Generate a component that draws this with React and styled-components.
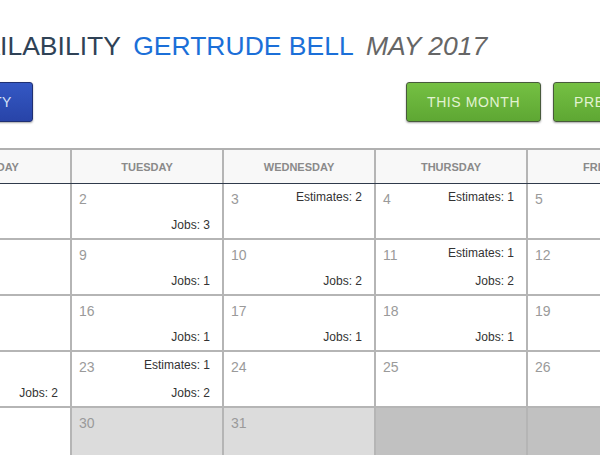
import React from "react";
import styled, { createGlobalStyle } from "styled-components";

const GlobalStyle = createGlobalStyle`
	body {
		margin: 0;
		background: #ffffff;
		overflow: hidden;
		font-family: "Liberation Sans", Arial, sans-serif;
	}
`;

const Page = styled.div`
	width: 1062px;
	margin-left: -232px;
`;

const Title = styled.h1`
	margin: 31px 0 0 183px;
	font-size: 26.5px;
	line-height: 30px;
	font-weight: normal;
	color: #2f4256;
	white-space: nowrap;
`;

const Name = styled.span`
	color: #1b6fd8;
	margin-left: 5px;
`;

const Month = styled.span`
	color: #666666;
	font-style: italic;
	margin-left: 5px;
`;

const Toolbar = styled.div`
	display: flex;
	margin-top: 21px;
	height: 40px;
`;

const LeftGroup = styled.div`
	flex: 0 0 265px;
	display: flex;
	justify-content: flex-end;
`;

const RightGroup = styled.div`
	flex: 0 0 auto;
	display: flex;
	gap: 12px;
	margin-left: 373px;
`;

const Button = styled.button`
	flex: 0 0 auto;
	height: 40px;
	padding: 0 20px;
	box-sizing: border-box;
	font-family: "Liberation Sans", Arial, sans-serif;
	font-size: 14px;
	letter-spacing: 0.6px;
	text-transform: uppercase;
	white-space: nowrap;
	border-radius: 3px;
	box-shadow: 0 1px 2px rgba(0, 0, 0, 0.35);
	cursor: pointer;
	border: 1px solid ${(p) => (p.$variant === "blue" ? "#1f2f72" : "#485a3c")};
	color: ${(p) => (p.$variant === "blue" ? "#d6e0f7" : "#e2f3d2")};
	background: ${(p) =>
		p.$variant === "blue"
			? "linear-gradient(#3458c4, #2844a8)"
			: "linear-gradient(#75c043, #5ea733)"};
`;

const Calendar = styled.div`
	margin-top: 26px;
	border-top: 2px solid #b0b0b0;
`;

const HeadRow = styled.div`
	display: grid;
	grid-template-columns: repeat(7, 150px);
	column-gap: 2px;
	background: #b5b5b5;
	border-bottom: 1px solid #2f3a4b;
`;

const HeadCell = styled.div`
	height: 33px;
	background: #f8f8f8;
	display: flex;
	align-items: center;
	justify-content: center;
	font-size: 11px;
	font-weight: bold;
	color: #8a8a8a;
	text-transform: uppercase;
`;

const Grid = styled.div`
	display: grid;
	grid-template-columns: repeat(7, 150px);
	grid-auto-rows: 54px;
	gap: 2px;
	background: #b5b5b5;
`;

const Cell = styled.div`
	box-sizing: border-box;
	padding: 5px 12px 5px 7px;
	display: grid;
	grid-template-columns: auto 1fr;
	grid-template-rows: 16px 1fr 16px;
	background: ${(p) => (p.$tone === "out" ? "#c1c1c1" : p.$tone === "past" ? "#dcdcdc" : "#ffffff")};
`;

const DayNum = styled.div`
	grid-column: 1;
	grid-row: 1;
	margin-top: 2px;
	font-size: 14px;
	line-height: 16px;
	color: #9a9a9a;
`;

const Count = styled.div`
	grid-column: 2;
	grid-row: ${(p) => (p.$bottom ? 3 : 1)};
	justify-self: end;
	font-size: 12px;
	line-height: 16px;
	color: #333333;
`;

const days = ["Sunday", "Monday", "Tuesday", "Wednesday", "Thursday", "Friday", "Saturday"];

const weeks = [
	[{ d: 30, tone: "out" }, { d: 1 }, { d: 2, jobs: 3 }, { d: 3, est: 2 }, { d: 4, est: 1 }, { d: 5 }, { d: 6 }],
	[{ d: 7 }, { d: 8 }, { d: 9, jobs: 1 }, { d: 10, jobs: 2 }, { d: 11, est: 1, jobs: 2 }, { d: 12 }, { d: 13 }],
	[{ d: 14 }, { d: 15 }, { d: 16, jobs: 1 }, { d: 17, jobs: 1 }, { d: 18, jobs: 1 }, { d: 19 }, { d: 20 }],
	[{ d: 21 }, { d: 22, jobs: 2 }, { d: 23, est: 1, jobs: 2 }, { d: 24 }, { d: 25 }, { d: 26 }, { d: 27 }],
	[
		{ d: 28 },
		{ d: 29 },
		{ d: 30, tone: "past" },
		{ d: 31, tone: "past" },
		{ d: 1, tone: "out" },
		{ d: 2, tone: "out" },
		{ d: 3, tone: "out" },
	],
];

const App = () => {
	return (
		<Page>
			<GlobalStyle />
			<Title>
				AVAILABILITY<Name> GERTRUDE BELL</Name>
				<Month> MAY 2017</Month>
			</Title>
			<Toolbar>
				<LeftGroup>
					<Button $variant="blue">Add Availability</Button>
				</LeftGroup>
				<RightGroup>
					<Button $variant="green">This Month</Button>
					<Button $variant="green">Prev Month</Button>
					<Button $variant="green">Next Month</Button>
				</RightGroup>
			</Toolbar>
			<Calendar>
				<HeadRow>
					{days.map((day) => (
						<HeadCell key={day}>{day}</HeadCell>
					))}
				</HeadRow>
				<Grid>
					{weeks.flat().map((c, i) => (
						<Cell key={i} $tone={c.tone}>
							{c.tone !== "out" && <DayNum>{c.d}</DayNum>}
							{c.est && <Count>Estimates: {c.est}</Count>}
							{c.jobs && <Count $bottom>Jobs: {c.jobs}</Count>}
						</Cell>
					))}
				</Grid>
			</Calendar>
		</Page>
	);
};

export default App;
